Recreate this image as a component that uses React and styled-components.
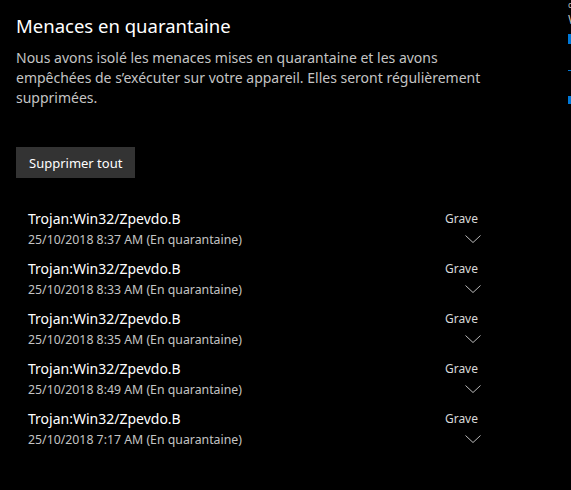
import React from "react"
import styled, { createGlobalStyle } from "styled-components"

const GlobalStyle = createGlobalStyle`
  html, body {
    margin: 0;
    padding: 0;
    background: #000;
  }
  body {
    font-family: "Noto Sans", "Open Sans", sans-serif;
    color: #fff;
    overflow: hidden;
  }
`

const Page = styled.div`
  display: flex;
  width: 571px;
  height: 490px;
  background: #000;
  overflow: hidden;
`

const Main = styled.section`
  flex: 0 0 553px;
  padding: 12px 0 0 16px;
  box-sizing: border-box;
`

const Title = styled.h1`
  margin: 0;
  font-size: 18.5px;
  font-weight: 400;
  line-height: 28px;
  color: #fff;
`

const Intro = styled.p`
  margin: 8px 0 0;
  width: 480px;
  font-size: 14px;
  line-height: 20px;
  color: #c4c4c4;
`

const Button = styled.button`
  margin-top: 39px;
  height: 31px;
  padding: 0 13px;
  border: 0;
  background: #333;
  color: #fff;
  font-family: inherit;
  font-size: 13px;
`

const List = styled.ul`
  list-style: none;
  margin: 31px 0 0;
  padding: 0 0 0 12px;
  width: 453px;
`

const Item = styled.li`
  display: flex;
  justify-content: space-between;
  height: 50px;
`

const Info = styled.div`
  display: flex;
  flex-direction: column;
`

const Name = styled.span`
  font-size: 14px;
  line-height: 20px;
  color: #fff;
`

const Date = styled.span`
  font-size: 12.3px;
  line-height: 22px;
  color: #c4c4c4;
`

const Severity = styled.div`
  display: flex;
  flex-direction: column;
  align-items: flex-end;
  padding-top: 2px;
`

const Level = styled.span`
  padding-right: 3px;
  font-size: 12px;
  line-height: 16px;
  color: #d8d8d8;
`

const Chevron = styled.svg`
  margin-top: 8px;
  width: 16px;
  height: 8px;
`

const Side = styled.aside`
  flex: 1;
  padding: 0 0 0 15px;
  overflow: hidden;
  display: flex;
  flex-direction: column;
`

const SideText = styled.span`
  font-size: ${({ size }) => size}px;
  line-height: ${({ lh }) => lh}px;
  color: #bbb;
  white-space: nowrap;
`

const SideBlock = styled.div`
  margin-top: ${({ top }) => top}px;
  width: 10px;
  height: ${({ h }) => h}px;
  background: #0078d7;
`

const threats = [
  "25/10/2018 8:37 AM (En quarantaine)",
  "25/10/2018 8:33 AM (En quarantaine)",
  "25/10/2018 8:35 AM (En quarantaine)",
  "25/10/2018 8:49 AM (En quarantaine)",
  "25/10/2018 7:17 AM (En quarantaine)",
]

const App = () => (
  <>
    <GlobalStyle />
    <Page>
      <Main>
        <Title>Menaces en quarantaine</Title>
        <Intro>
          Nous avons isolé les menaces mises en quarantaine et les avons
          empêchées de s’exécuter sur votre appareil. Elles seront régulièrement
          supprimées.
        </Intro>
        <Button>Supprimer tout</Button>
        <List>
          {threats.map((d, i) => (
            <Item key={i}>
              <Info>
                <Name>Trojan:Win32/Zpevdo.B</Name>
                <Date>{d}</Date>
              </Info>
              <Severity>
                <Level>Grave</Level>
                <Chevron viewBox="0 0 16 8">
                  <path d="M0.5 0.5 L8 7.5 L15.5 0.5" fill="none" stroke="#bbb" strokeWidth="1" />
                </Chevron>
              </Severity>
            </Item>
          ))}
        </List>
      </Main>
      <Side>
        <SideText size={9} lh={10}>c</SideText>
        <SideText size={13} lh={18}>W</SideText>
        <SideBlock top={6} h={10} />
        <SideBlock top={26} h={1} />
        <SideBlock top={25} h={8} />
      </Side>
    </Page>
  </>
)

export default App
